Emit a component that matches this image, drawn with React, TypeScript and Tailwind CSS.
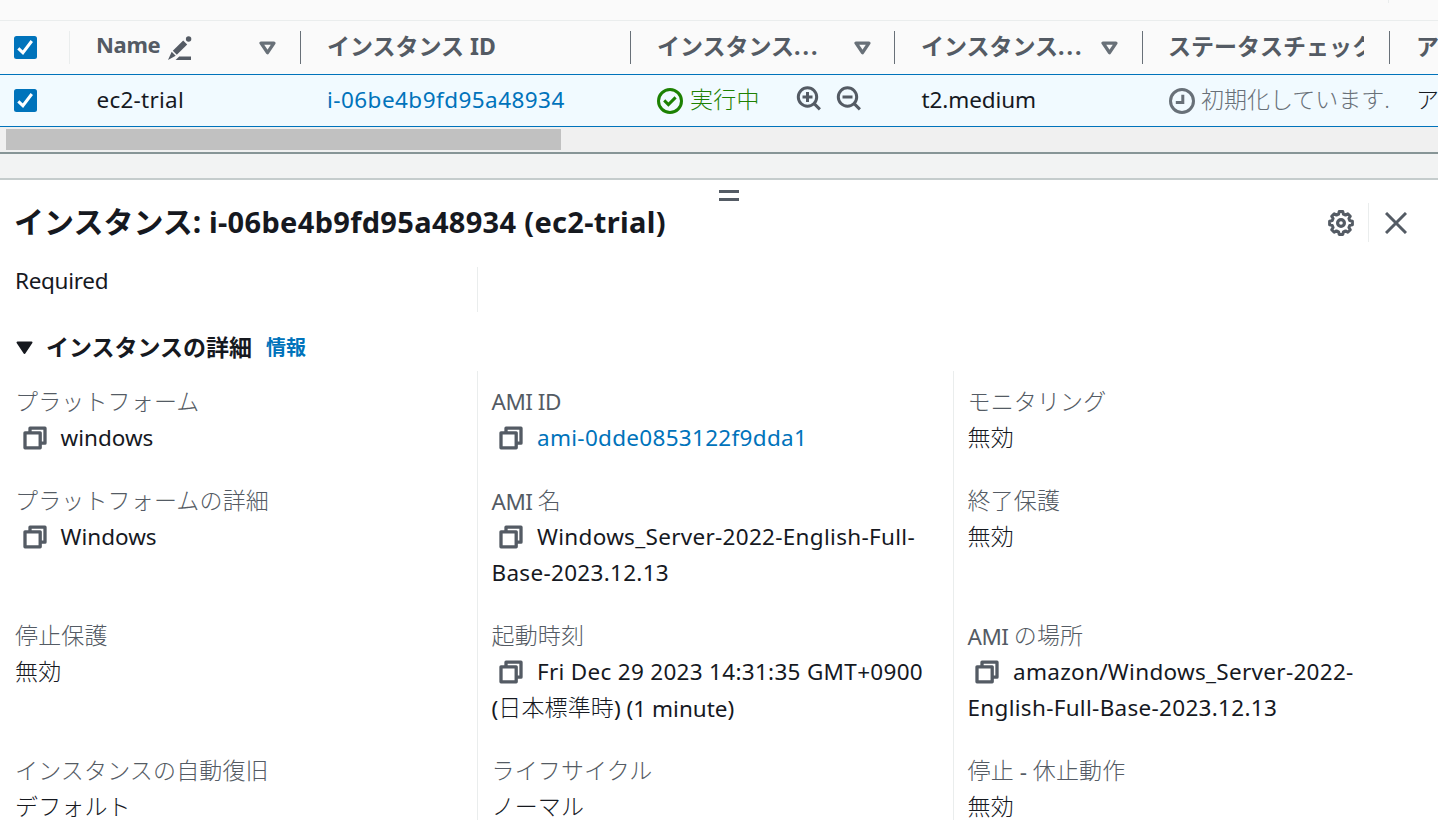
import React from "react";

interface IconProps {
  className?: string;
}

const CheckboxIcon: React.FC = () => (
  <svg className="block h-[23px] w-[23px]" viewBox="0 0 23 23" fill="none">
    <rect width="23" height="23" rx="2.5" fill="#0073bb" />
    <path d="M4.3 12.4l4.6 4.3L17.8 5" stroke="#fff" strokeWidth="3" />
  </svg>
);

const PencilIcon: React.FC = () => (
  <svg className="block h-6 w-6 shrink-0" viewBox="0 0 24 24" fill="#545b64">
    <circle cx="20.6" cy="3" r="2.7" />
    <path d="M15.2 4.4l4 4L8.8 18.8l-4-4z" />
    <path d="M3.7 15.8l4 4L0 24z" />
    <path d="M11.2 20.4H23V24H7.6z" />
  </svg>
);

const SortIcon: React.FC<IconProps> = ({ className = "" }) => (
  <svg className={`block h-[14px] w-[17px] shrink-0 ${className}`} viewBox="0 0 17 14" fill="none">
    <path d="M2.1 2.1h12.8L8.5 11.6z" stroke="#687078" strokeWidth="3.4" strokeLinejoin="round" />
  </svg>
);

const SuccessIcon: React.FC = () => (
  <svg className="block h-[26px] w-[26px] shrink-0" viewBox="0 0 26 26" fill="none" stroke="#1d8102" strokeWidth="3">
    <circle cx="13" cy="13" r="11.5" />
    <path d="M7.2 12.4l4.2 4.2 7.2-7.2" />
  </svg>
);

const PendingIcon: React.FC = () => (
  <svg className="block h-[26px] w-[26px] shrink-0" viewBox="0 0 26 26" fill="none" stroke="#687078" strokeWidth="3">
    <circle cx="13" cy="13" r="11.5" />
    <path d="M13.8 6.8v7.8H6.8" />
  </svg>
);

const ZoomIcon: React.FC<{ plus?: boolean }> = ({ plus = false }) => (
  <svg className="block h-[25px] w-[25px]" viewBox="0 0 25 25" fill="none" stroke="#545b64" strokeWidth="3">
    <circle cx="11.5" cy="11" r="9.2" />
    <path d="M17.9 17.4l6 6M6.5 11h10" />
    {plus && <path d="M11.5 6v10" />}
  </svg>
);

const CopyIcon: React.FC = () => (
  <svg
    className="mr-[14px] ml-[7.5px] inline-block h-[24px] w-[24px] align-[-4px]"
    viewBox="0 0 24 24"
    fill="none"
    stroke="#545b64"
    strokeWidth="3.3"
    strokeLinejoin="round"
  >
    <path d="M2 6.8h15.2v15H2z" />
    <path d="M7 6.8V2.2h15v15h-4.8" />
  </svg>
);

const GearIcon: React.FC = () => (
  <svg className="block h-[26px] w-[26px]" viewBox="0 0 26 26" fill="none" stroke="#545b64">
    <path
      d="M10.6 4.2L11.2 1.6h3.6l.6 2.6 2.1.9 2.3-1.4 2.5 2.5-1.4 2.3.9 2.1 2.6.6v3.6l-2.6.6-.9 2.1 1.4 2.3-2.5 2.5-2.3-1.4-2.1.9-.6 2.6h-3.6l-.6-2.6-2.1-.9-2.3 1.4-2.5-2.5 1.4-2.3-.9-2.1-2.6-.6v-3.6l2.6-.6.9-2.1-1.4-2.3 2.5-2.5 2.3 1.4z"
      strokeWidth="3"
      strokeLinejoin="round"
    />
    <circle cx="13" cy="13" r="3.4" strokeWidth="3.2" />
  </svg>
);

const CloseIcon: React.FC = () => (
  <svg className="block h-[22px] w-[22px]" viewBox="0 0 22 22" fill="none" stroke="#545b64" strokeWidth="3">
    <path d="M1 1l20 20M21 1L1 21" />
  </svg>
);

interface Detail {
  label: string;
  lines: string[];
  copy?: boolean;
  link?: boolean;
}

const details: Detail[] = [
  { label: "プラットフォーム", lines: ["windows"], copy: true },
  { label: "AMI ID", lines: ["ami-0dde0853122f9dda1"], copy: true, link: true },
  { label: "モニタリング", lines: ["無効"] },
  { label: "プラットフォームの詳細", lines: ["Windows"], copy: true },
  { label: "AMI 名", lines: ["Windows_Server-2022-English-Full-", "Base-2023.12.13"], copy: true },
  { label: "終了保護", lines: ["無効"] },
  { label: "停止保護", lines: ["無効"] },
  { label: "起動時刻", lines: ["Fri Dec 29 2023 14:31:35 GMT+0900", "(日本標準時) (1 minute)"], copy: true },
  { label: "AMI の場所", lines: ["amazon/Windows_Server-2022-", "English-Full-Base-2023.12.13"], copy: true },
  { label: "インスタンスの自動復旧", lines: ["デフォルト"] },
  { label: "ライフサイクル", lines: ["ノーマル"] },
  { label: "停止 - 休止動作", lines: ["無効"] },
];

const isLatin = (text: string) => /^[\x20-\x7e]+$/.test(text);

const latinTracking = (text: string) => {
  if (text.startsWith("AMI")) return "tracking-[-0.5px]";
  return text.length > 12 ? "tracking-[0.3px]" : "tracking-normal";
};

const Text: React.FC<{ text: string }> = ({ text }) => (
  <>
    {text.split(/([^\x20-\x7e]+)/).filter(Boolean).map((run, i) => (
      <span
        key={i}
        className={isLatin(run) ? `text-[22.5px] ${latinTracking(run)}` : "align-[1px] font-light tracking-[0.15px]"}
      >
        {run}
      </span>
    ))}
  </>
);

const DetailCell: React.FC<{ detail: Detail; first: boolean }> = ({ detail, first }) => (
  <div className={`pt-3 pb-[15px] leading-9 whitespace-nowrap ${first ? "pl-[15px]" : "border-l border-[#eaeded] pl-[13.5px]"}`}>
    <div className="h-9 text-[#545b64]">
      <Text text={detail.label} />
    </div>
    {detail.lines.map((line, i) => (
      <div key={line} className={`h-9 ${detail.link ? "text-[#0073bb]" : "text-[#16191f]"}`}>
        {detail.copy && i === 0 && <CopyIcon />}
        <Text text={line} />
      </div>
    ))}
  </div>
);

const columns = "grid grid-cols-[70px_231px_330px_264px_248px_247px_48px]";

const Divider: React.FC<{ light?: boolean }> = ({ light = false }) => (
  <div className={`h-[33px] w-px shrink-0 ${light ? "bg-[#eaeded]" : "bg-[#687078]"}`} />
);

const InstanceTable: React.FC = () => (
  <div className="shrink-0 overflow-hidden whitespace-nowrap">
    <div className="flex h-[21px] items-start border-b border-[#eaeded] bg-[#fafafa] pl-[1388px]">
      <div className="h-[3px] w-px bg-[#eaeded]" />
    </div>
    <div className={`${columns} h-[53px] items-center bg-[#fafafa] font-bold text-[#545b64]`}>
      <div className="flex items-center justify-between pl-[14px]">
        <CheckboxIcon />
        <Divider light />
      </div>
      <div className="flex items-center pl-[26px]">
        <span className="-mt-[8px] mr-[8px] w-[64px] text-[22px] tracking-[-0.3px]">Name</span>
        <PencilIcon />
        <SortIcon className="mr-6 ml-auto" />
        <Divider />
      </div>
      <div className="flex items-center justify-between pl-[26px]">
        <span className="-mt-[3px]">インスタンス ID</span>
        <Divider />
      </div>
      <div className="flex items-center pl-[26px]">
        <span className="-mt-[3px]">
          インスタンス<span className="tracking-[2px]">...</span>
        </span>
        <SortIcon className="mr-[23px] ml-auto" />
        <Divider />
      </div>
      <div className="flex items-center pl-[26px]">
        <span className="-mt-[3px]">
          インスタンス<span className="tracking-[2px]">...</span>
        </span>
        <SortIcon className="mr-6 ml-auto" />
        <Divider />
      </div>
      <div className="flex items-center justify-between pl-[25px]">
        <span className="-mt-[3px] w-[196px] overflow-hidden">ステータスチェック</span>
        <Divider />
      </div>
      <div className="-mt-[3px] overflow-hidden pl-[26px]">アラーム</div>
    </div>
    <div className={`${columns} h-[53px] items-center border-y border-[#0073bb] bg-[#f1faff] text-[#16191f]`}>
      <div className="pl-[14px]">
        <CheckboxIcon />
      </div>
      <div className="-mt-[2px] pl-[26.5px] text-[22.5px] tracking-[0.25px]">ec2-trial</div>
      <div className="-mt-[2px] pl-[26px] text-[22.5px] tracking-[0.45px] text-[#0073bb]">i-06be4b9fd95a48934</div>
      <div className="flex items-center pl-[26px]">
        <SuccessIcon />
        <span className="-mt-[3px] ml-[7px] font-light tracking-[0.3px] text-[#1d8102]">実行中</span>
        <div className="-mt-[4px] ml-[36px] flex gap-[15px]">
          <ZoomIcon plus />
          <ZoomIcon />
        </div>
      </div>
      <div className="-mt-[2px] pl-[26.5px] text-[22.5px] tracking-[-0.1px]">t2.medium</div>
      <div className="flex items-center overflow-hidden pl-[26px] text-[#687078]">
        <PendingIcon />
        <span className="-mt-[3px] ml-[6px] font-light">初期化しています...</span>
      </div>
      <div className="-mt-[3px] overflow-hidden pl-[26px] font-light">アラーム</div>
    </div>
    <div className="h-[25px] bg-[#f0f0f0] pt-[2px] pl-[6px]">
      <div className="h-[21px] w-[555px] bg-[#c1c1c1]" />
    </div>
  </div>
);

export default function App() {
  return (
    <div
      lang="ja"
      className="flex h-[820px] w-[1438px] flex-col overflow-hidden bg-white font-['Noto_Sans','Noto_Sans_CJK_JP',sans-serif] text-[23px] leading-9"
    >
      <InstanceTable />
      <div className="h-7 shrink-0 border-t-2 border-b-2 border-t-[#879596] border-b-[#c5cccc] bg-[#f2f3f3]" />

      <div className="flex h-[87px] shrink-0 flex-col">
        <div className="flex flex-col items-center gap-[5px] pt-[10px] pl-[20px]">
          <div className="h-[3px] w-5 bg-[#545b64]" />
          <div className="h-[3px] w-5 bg-[#545b64]" />
        </div>
        <div className="flex items-center pr-[31px] pl-[14px] text-[#16191f]">
          <h1 className="mt-[1px] h-10 text-[30px] leading-10 font-bold">
            インスタンス: <span className="text-[29px] tracking-[0.32px]">i-06be4b9fd95a48934 (ec2-trial)</span>
          </h1>
          <div className="mt-[2px] ml-auto flex items-center">
            <GearIcon />
            <div className="mr-4 ml-[14px] h-[39px] w-px bg-[#eaeded]" />
            <CloseIcon />
          </div>
        </div>
      </div>

      <div className="grid h-[45px] shrink-0 grid-cols-[477px_476px_485px]">
        <div className="pl-[15px] text-[22.5px] leading-7 tracking-[-0.3px] text-[#16191f]">Required</div>
        <div className="border-l border-[#eaeded]" />
      </div>

      <div className="flex h-[59px] shrink-0 items-center pt-3 pl-4">
        <svg className="block h-[14px] w-[17px]" viewBox="0 0 17 14" fill="#16191f">
          <path d="M1.5 1.5h14L8.5 12z" stroke="#16191f" strokeWidth="2" strokeLinejoin="round" />
        </svg>
        <h2 className="-mt-[2px] ml-[13px] font-bold text-[#16191f]">インスタンスの詳細</h2>
        <a className="mt-[1px] ml-[14px] text-[20px] font-bold text-[#0073bb]">情報</a>
      </div>

      <div className="grid shrink-0 grid-cols-[477px_476px_485px]">
        {details.map((detail, i) => (
          <DetailCell key={detail.label} detail={detail} first={i % 3 === 0} />
        ))}
      </div>
    </div>
  );
}
